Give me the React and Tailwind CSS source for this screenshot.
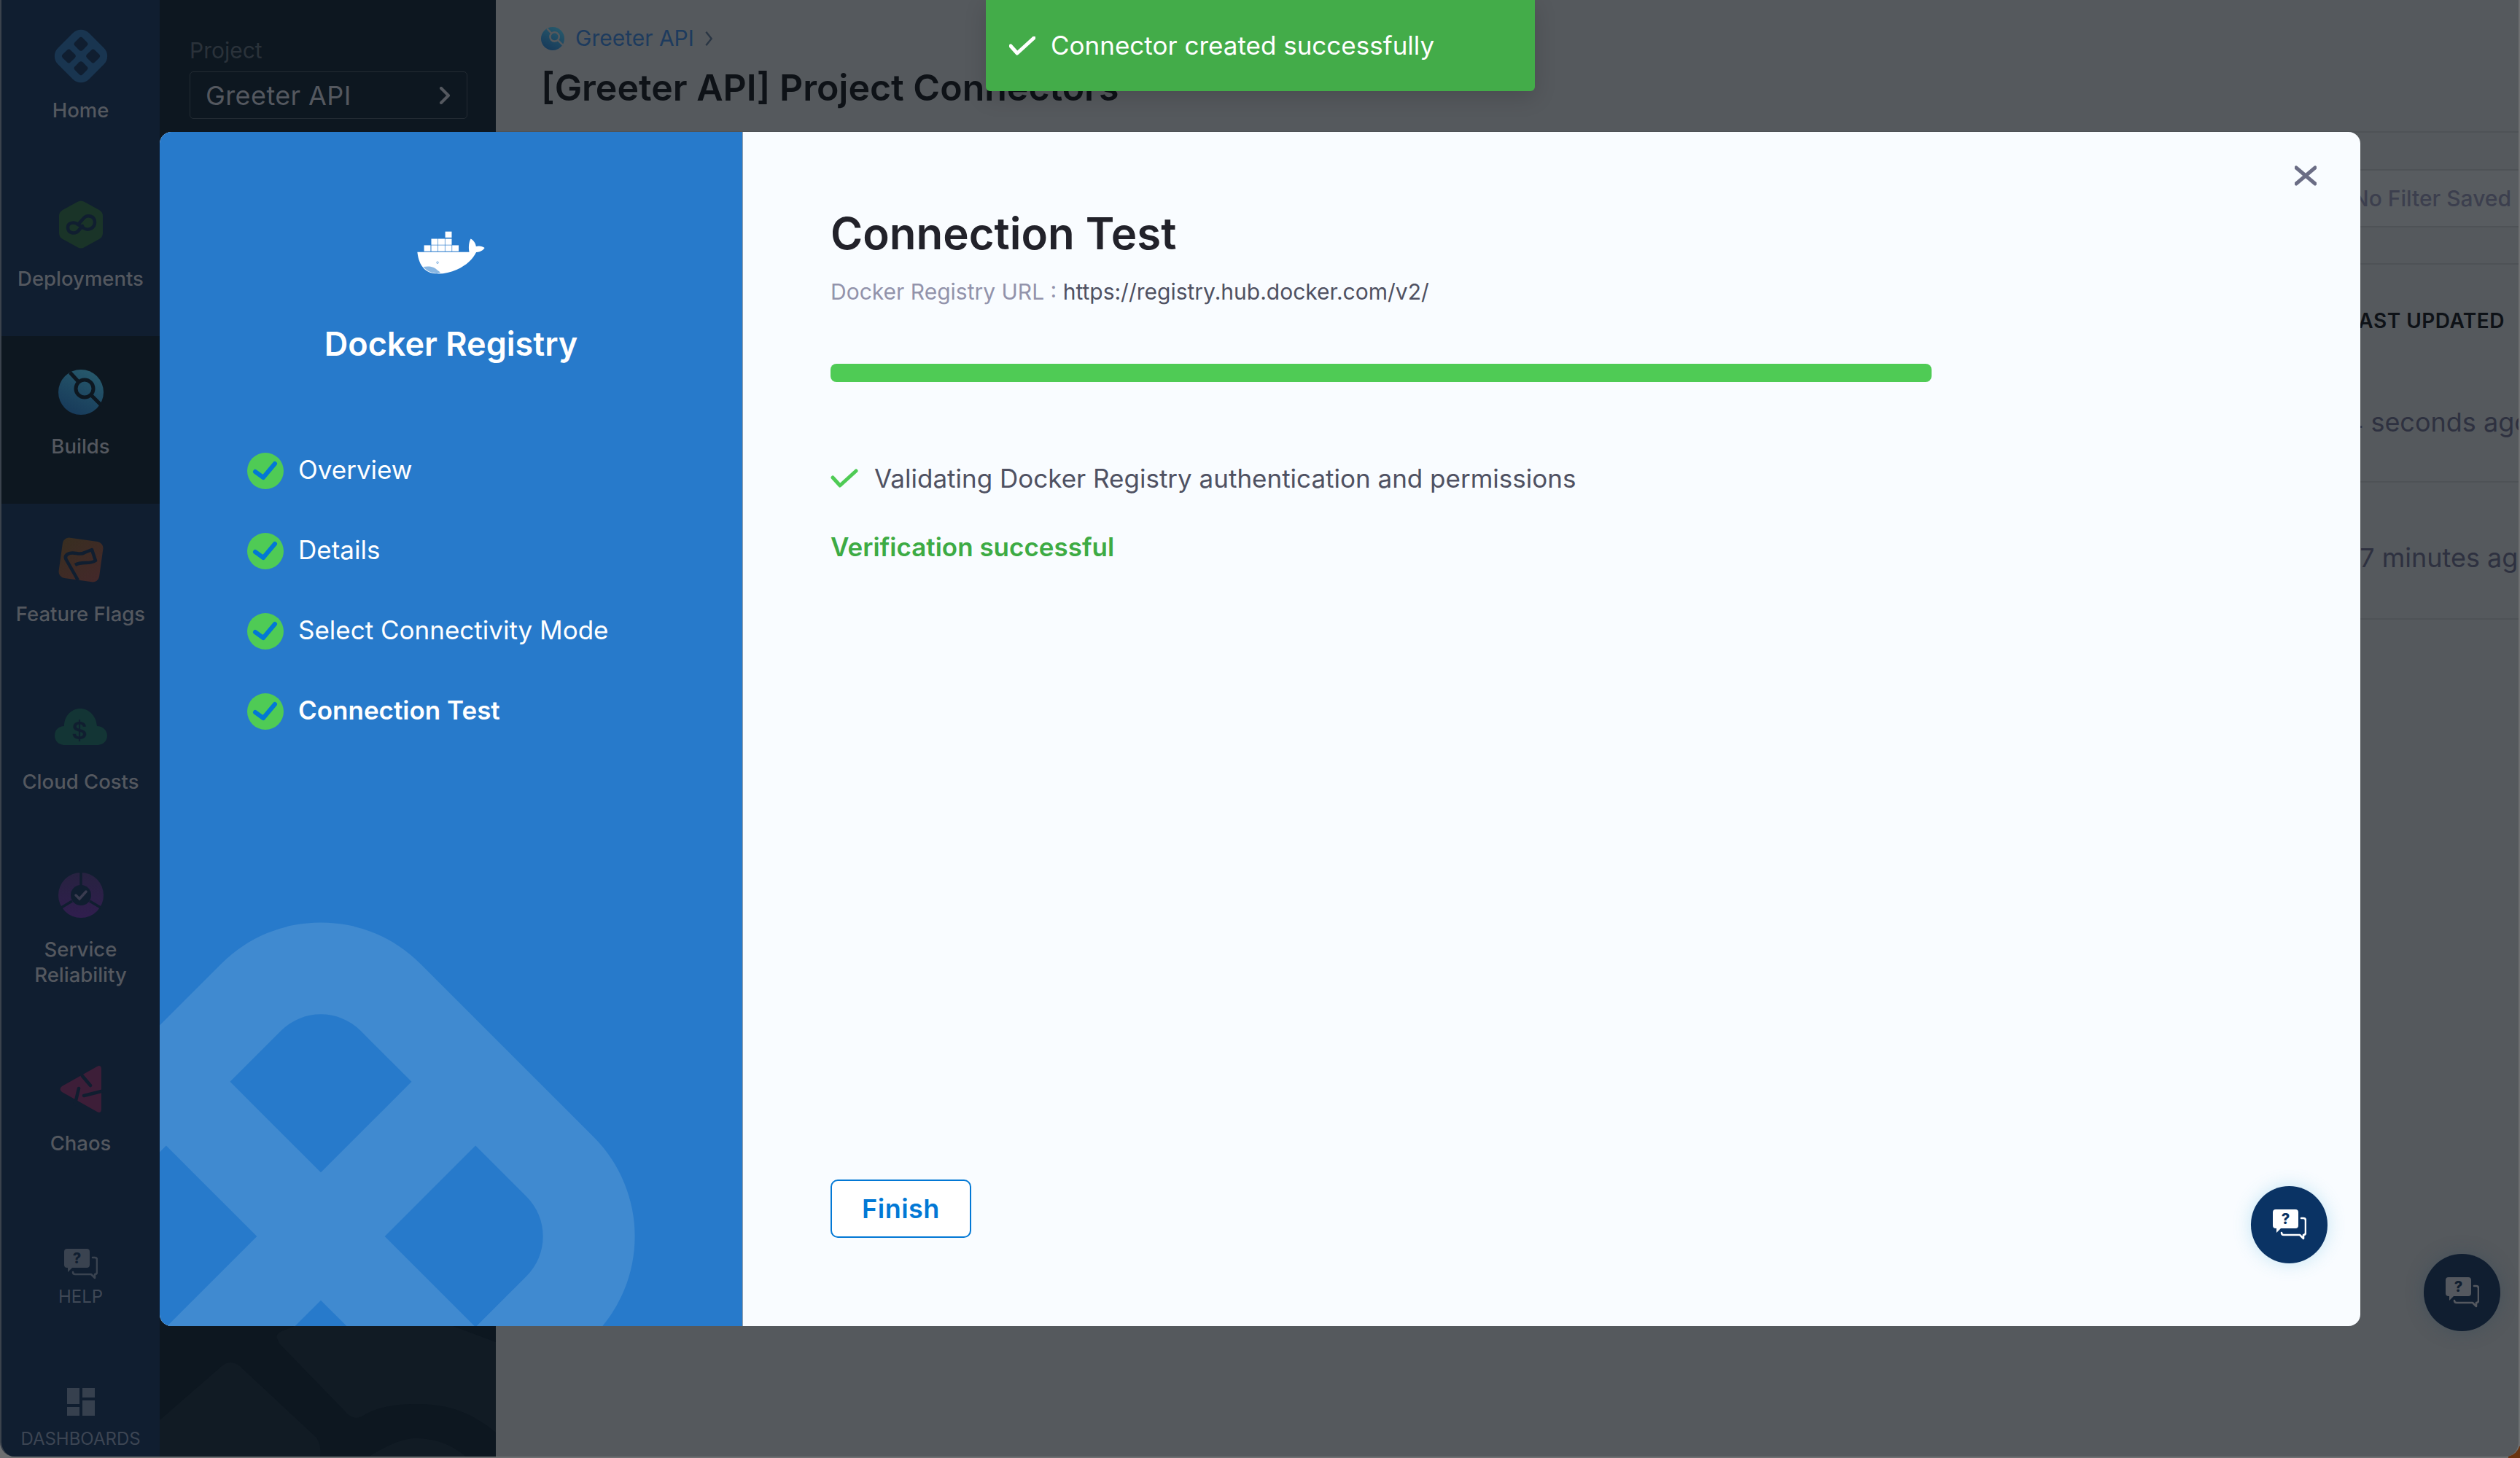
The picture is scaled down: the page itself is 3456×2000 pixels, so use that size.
const F = { fontFamily: 'Inter, "Noto Sans", sans-serif' };

function HarnessMark({ outer, inner }) {
  return (
    <svg viewBox="-50 -50 100 100" className="w-full h-full">
      <g transform="rotate(45)">
        <rect x="-36" y="-36" width="72" height="72" rx="19" fill={outer} />
        <rect x="-23" y="-23" width="18" height="18" rx="4" fill={inner} />
        <rect x="5" y="-23" width="18" height="18" rx="4" fill={inner} />
        <rect x="-23" y="5" width="18" height="18" rx="4" fill={inner} />
        <rect x="5" y="5" width="18" height="18" rx="4" fill={inner} />
      </g>
    </svg>
  );
}

function DeployIcon() {
  return (
    <svg viewBox="0 0 62 66" className="w-[62px] h-[66px]">
      <path d="M26 2 Q31 -1 36 2 L56 13 Q61 16 61 21 L61 45 Q61 50 56 53 L36 64 Q31 67 26 64 L6 53 Q1 50 1 45 L1 21 Q1 16 6 13 Z" fill="#1a3428" />
      <path d="M13 37 C13 30 22 29 27 33 L35 38 C41 42 50 38 50 30 C50 21 40 19 35 24 L27 33 M13 37 C13 45 23 47 28 41 L33 35" fill="none" stroke="#101e30" strokeWidth="4.5" strokeLinecap="round" />
    </svg>
  );
}

function BuildIcon({ size = 62, bgStroke = '#0d1720', id = 'b1' }) {
  return (
    <svg viewBox="0 0 62 62" style={{ width: size, height: size }}>
      <defs>
        <linearGradient id={id} x1="0.8" y1="0" x2="0.3" y2="1">
          <stop offset="0" stopColor="#275a6c" />
          <stop offset="1" stopColor="#173a5a" />
        </linearGradient>
      </defs>
      <circle cx="31" cy="31" r="31" fill={`url(#${id})`} />
      <circle cx="36" cy="26" r="12" fill="none" stroke={bgStroke} strokeWidth="5" />
      <path d="M16 4 L28 17 M45 35 L60 50" stroke={bgStroke} strokeWidth="5" />
    </svg>
  );
}

function FlagIcon() {
  return (
    <svg viewBox="0 0 66 66" className="w-[66px] h-[66px]">
      <defs>
        <linearGradient id="ff" x1="0" y1="0" x2="1" y2="1">
          <stop offset="0" stopColor="#382e20" />
          <stop offset="1" stopColor="#44282a" />
        </linearGradient>
      </defs>
      <rect x="5" y="5" width="56" height="56" rx="9" fill="url(#ff)" transform="rotate(8 33 33)" />
      <path d="M29 61 L13 33 Q10 28 15 25 C23 20 30 28 38 23 L48 19 L53 34 C44 40 35 34 25 40" fill="none" stroke="#101e30" strokeWidth="4.5" strokeLinejoin="round" />
    </svg>
  );
}

function CloudIcon() {
  return (
    <svg viewBox="0 0 72 52" className="w-[72px] h-[52px]">
      <path d="M14 50 C5 50 0 44 0 37 C0 29 6 24 13 24 C13 10 23 0 35 0 C47 0 57 10 58 24 C66 24 72 30 72 37 C72 45 66 50 58 50 Z" fill="#133535" />
      <text x="34" y="42" textAnchor="middle" fontSize="33" fontWeight="600" fontFamily="Inter, sans-serif" fill="#101e30">$</text>
    </svg>
  );
}

function SrmIcon() {
  return (
    <svg viewBox="0 0 62 62" className="w-[62px] h-[62px]">
      <defs>
        <linearGradient id="sr" x1="0" y1="0" x2="0" y2="1">
          <stop offset="0" stopColor="#272240" />
          <stop offset="1" stopColor="#301e4e" />
        </linearGradient>
      </defs>
      <circle cx="31" cy="31" r="31" fill="url(#sr)" />
      <circle cx="31" cy="31" r="14" fill="#101e30" />
      <path d="M31 0 V18 M19 39 L4 48 M43 39 L58 48" stroke="#101e30" strokeWidth="3.5" />
      <path d="M24 31 L29 36 L38 26" fill="none" stroke="#3a3c50" strokeWidth="3.5" strokeLinecap="round" />
    </svg>
  );
}

function ChaosIcon() {
  return (
    <svg viewBox="0 0 60 66" className="w-[60px] h-[66px]">
      <path d="M52 2 Q58 -1 58 6 L58 60 Q58 67 52 64 L4 37 Q-1 33 4 29 Z" fill="#3d1e38" />
      <path d="M32 15 L43 28 M27 32 L22 53 M34 42 L58 36" stroke="#101e30" strokeWidth="4.5" strokeLinecap="round" />
    </svg>
  );
}

function HelpGlyph({ fill, cut, className }) {
  return (
    <svg viewBox="0 0 46 42" className={className}>
      <path d="M4 0 H31 Q35 0 35 4 V22 Q35 26 31 26 H11 L5 32 V26 H4 Q0 26 0 22 V4 Q0 0 4 0 Z" fill={fill} />
      <text x="17.5" y="20" textAnchor="middle" fontSize="20" fontWeight="800" fontFamily="Inter, sans-serif" fill={cut}>?</text>
      <path d="M39 12 H42 Q45 12 45 15 V32 Q45 35 42 35 V40 L37 35 H15 Q12 35 12 32" fill="none" stroke={fill} strokeWidth="2.6" strokeLinecap="round" strokeLinejoin="round" />
    </svg>
  );
}

function DashIcon() {
  return (
    <svg viewBox="0 0 38 38" className="w-[38px] h-[38px]" fill="#36404e">
      <rect x="0" y="0" width="17" height="22" />
      <rect x="21" y="0" width="17" height="13" />
      <rect x="0" y="26" width="17" height="12" />
      <rect x="21" y="17" width="17" height="21" />
    </svg>
  );
}

function NavItem({ icon, label, active, h = 'h-[230px]' }) {
  return (
    <div className={`${h} flex flex-col items-center pt-[37px] ${active ? 'bg-[#0d1720]' : ''}`}>
      <div className="h-[80px] flex items-center justify-center">{icon}</div>
      <div className="mt-[17px] text-center text-[27.5px] leading-[35px] font-medium text-[#54585f] whitespace-pre-line">{label}</div>
    </div>
  );
}

function Docker() {
  const boxes = [[331,110],[273,140],[302,140],[331,140],[243,167],[273,167],[302,167],[331,167],[360,167]];
  return (
    <svg viewBox="215 105 280 182" className="w-[93px] h-[60px]">
      {boxes.map(([x, y]) => <rect key={x + '-' + y} x={x} y={y} width="27" height="25" fill="#fff" />)}
      <path d="M215 195 H431 C427 175 430 152 437 140 C448 146 458 158 459 172 C470 168 486 170 495 178 C488 190 472 197 460 196 C445 225 420 250 380 268 C350 282 320 287 290 285 C250 281 222 255 215 195 Z" fill="#fff" />
      <circle cx="299" cy="239" r="4" fill="none" stroke="#277acb" strokeWidth="1.6" />
      <path d="M240 257 C262 252 285 255 300 272 C310 279 318 283 296 284 C270 283 252 272 240 257 Z" fill="#277acb" opacity="0.55" />
    </svg>
  );
}

function Step({ label, bold }) {
  return (
    <div className="flex items-center h-[50px]">
      <svg viewBox="0 0 50 50" className="w-[50px] h-[50px] shrink-0">
        <circle cx="25" cy="25" r="25" fill="#4fcb55" />
        <path d="M11 26 L22 34 L38 15" fill="none" stroke="#0278d5" strokeWidth="6" strokeLinecap="round" strokeLinejoin="round" />
      </svg>
      <span className={`ml-[20px] -mt-[5px] text-[35px] leading-[44px] text-white ${bold ? 'font-semibold' : 'font-normal'}`}>{label}</span>
    </div>
  );
}

function Watermark() {
  const r = 77;
  const hole = (sx, sy) => {
    // one rounded outer corner, three sharp; sx, sy say which quadrant the hole lies in
    const a = 62;
    const b = 238;
    const sweep = sx * sy > 0 ? 1 : 0;
    return `M${sx * a} ${sy * a} L${sx * b} ${sy * a} L${sx * b} ${sy * (b - r)} A${r} ${r} 0 0 ${sweep} ${sx * (b - r)} ${sy * b} L${sx * a} ${sy * b} Z`;
  };
  const R = 193;
  const S = 361;
  const d = [
    `M${-S + R} ${-S} H${S - R} A${R} ${R} 0 0 1 ${S} ${-S + R} V${S - R} A${R} ${R} 0 0 1 ${S - R} ${S} H${-S + R} A${R} ${R} 0 0 1 ${-S} ${S - R} V${-S + R} A${R} ${R} 0 0 1 ${-S + R} ${-S} Z`,
    hole(-1, -1),
    hole(1, -1),
    hole(-1, 1),
    hole(1, 1),
  ].join(' ');
  return (
    <svg viewBox="0 0 799 1638" className="absolute inset-0 w-[799px] h-[1638px]">
      <path transform="translate(221 1515) rotate(45)" d={d} fill="#408ad0" fillRule="evenodd" />
    </svg>
  );
}

function SideWatermark() {
  return (
    <svg viewBox="0 0 461 181" className="absolute left-0 bottom-0 w-[461px] h-[181px]" fill="#111b24">
      <path d="M0 131 L85 57 Q97 47 110 57 L215 155 Q222 165 220 181 L0 181 Z" />
      <path d="M161 19 Q158 12 170 8 L190 0 L397 0 L461 24 L461 148 C420 115 390 109 350 109 C310 109 290 118 277 126 Q267 131 258 123 L164 26 Z" />
      <path d="M287 181 C320 160 340 156 350 156 C380 156 400 165 420 181 Z" />
    </svg>
  );
}

export default function App() {
  return (
    <div className="relative w-[3456px] h-[2000px] overflow-hidden bg-[#6d6f71]" style={F}>
      <div className="absolute right-0 bottom-0 w-[16px] h-[16px] bg-[#6b3410]" />
      <div className="relative flex w-[3456px] h-[1998px] rounded-b-[20px] overflow-hidden bg-[#55595d] border-l-2 border-r-2 border-l-[#3a424c] border-r-[#6d6f71]">
        {/* primary nav */}
        <aside className="w-[217px] shrink-0 flex flex-col bg-[#101e30]">
          <NavItem h="h-[231px]" icon={<div className="w-[84px] h-[84px]"><HarnessMark outer="#193550" inner="#101e30" /></div>} label="Home" />
          <NavItem icon={<DeployIcon />} label="Deployments" />
          <NavItem icon={<BuildIcon id="b-nav" />} label="Builds" active />
          <NavItem icon={<FlagIcon />} label="Feature Flags" />
          <NavItem icon={<CloudIcon />} label="Cloud Costs" />
          <NavItem icon={<SrmIcon />} label={'Service\nReliability'} h="h-[266px]" />
          <NavItem icon={<ChaosIcon />} label="Chaos" h="h-[230px]" />
          <div className="flex flex-col items-center pt-[66px]">
            <HelpGlyph fill="#3a4350" cut="#101e30" className="w-[46px] h-[42px]" />
            <div className="mt-[9px] text-[24px] leading-[30px] text-[#3f4856]">HELP</div>
          </div>
          <div className="flex flex-col items-center pt-[110px]">
            <DashIcon />
            <div className="mt-[17px] text-[24px] leading-[30px] text-[#3c4553]">DASHBOARDS</div>
          </div>
        </aside>

        {/* secondary nav */}
        <div className="relative w-[461px] shrink-0 bg-[#0d1720] px-[41px] pt-[50px] overflow-hidden">
          <SideWatermark />
          <div className="text-[30px] leading-[38px] text-[#2a323a]">Project</div>
          <div className="mt-[10px] h-[65px] w-[381px] rounded-[5px] border border-[#232b33] pl-[21px] pr-[22px] flex items-center justify-between">
            <span className="text-[36px] tracking-[0.4px] text-[#54585f]">Greeter API</span>
            <svg viewBox="0 0 16 24" className="w-[16px] h-[24px]"><path d="M3 2 L13 12 L3 22" fill="none" stroke="#54585f" strokeWidth="4" strokeLinecap="round" strokeLinejoin="round" /></svg>
          </div>
        </div>

        {/* main */}
        <main className="flex-1 min-w-0 flex flex-col overflow-hidden">
          <header className="h-[182px] border-b-2 border-[#4e5256] pl-[62px] pt-[36px] shrink-0">
            <div className="flex items-center h-[33px]">
              <BuildIcon size={32} bgStroke="#55595d" id="b-crumb" />
              <span className="ml-[15px] text-[30px] text-[#1d3b5e]">Greeter API</span>
              <svg viewBox="0 0 12 24" className="ml-[14px] w-[12px] h-[22px]"><path d="M2 2 L10 12 L2 22" fill="none" stroke="#2a3644" strokeWidth="2.6" /></svg>
            </div>
            <h1 className="mt-[20px] text-[50px] leading-[62px] font-semibold text-[#0e1217] whitespace-nowrap">[Greeter API] Project Connectors</h1>
          </header>
          <div className="h-[52px] border-b-2 border-[#4e5256] shrink-0" />
          <div className="h-[78px] border-b-2 border-[#4e5256] shrink-0 flex items-center justify-end pr-[10px] bg-[#585c60]">
            <span className="text-[30px] font-medium text-[#3c3f4e]">No Filter Saved</span>
          </div>
          <div className="h-[51px] border-b-2 border-[#4e5256] shrink-0" />
          <div className="h-[299px] border-b-2 border-[#4e5256] shrink-0 grid grid-cols-[1fr_236px] content-start">
            <div />
            <div className="pt-[59px] text-[28px] leading-[36px] font-semibold tracking-[0.5px] text-[#0e1217] whitespace-nowrap">LAST UPDATED</div>
            <div />
            <div className="pt-[99px] text-[36px] leading-[44px] text-[#2e3140] whitespace-nowrap">4 seconds ago</div>
          </div>
          <div className="h-[188px] border-b-2 border-[#4e5256] shrink-0 grid grid-cols-[1fr_240px]">
            <div />
            <div className="pt-[81px] text-[36px] leading-[44px] text-[#2e3140] whitespace-nowrap">37 minutes ago</div>
          </div>
        </main>
      </div>

      {/* help bubble behind the modal */}
      <div className="absolute left-[3324px] top-[1720px] w-[105px] h-[106px] rounded-full bg-[#101e30] flex items-center justify-center shadow-[0_0_24px_rgba(40,70,90,0.35)]">
        <HelpGlyph fill="#54585f" cut="#101e30" className="w-[46px] h-[42px]" />
      </div>

      {/* modal */}
      <div className="absolute left-[219px] top-[181px] w-[3018px] h-[1638px] rounded-[16px] overflow-hidden flex bg-[#f9fcff]">
        <div className="relative w-[799px] shrink-0 bg-[#277acb] overflow-hidden">
          <Watermark />
          <div className="relative flex flex-col pt-[135px]">
            <div className="flex justify-center"><Docker /></div>
            <div className="mt-[67px] text-center text-[45px] leading-[58px] font-semibold text-white">Docker Registry</div>
            <div className="mt-[120px] pl-[120px] flex flex-col gap-[60px]">
              <Step label="Overview" />
              <Step label="Details" />
              <Step label="Select Connectivity Mode" />
              <Step label="Connection Test" bold />
            </div>
          </div>
        </div>
        <div className="relative flex-1 flex flex-col pl-[120px] pt-[100px] pb-[121px] border-l border-[#9aa3ad]">
          <svg viewBox="0 0 30 30" className="absolute right-[60px] top-[45px] w-[30px] h-[30px]">
            <path d="M2 4 L28 26 M28 4 L2 26" stroke="#6b6d85" strokeWidth="5" strokeLinecap="round" />
          </svg>
          <h2 className="text-[60px] leading-[78px] font-semibold text-[#22222a]">Connection Test</h2>
          <div className="mt-[21px] text-[30px] leading-[40px] whitespace-nowrap">
            <span className="text-[#9293ab]">Docker Registry URL : </span>
            <span className="text-[#4f5162]">https://registry.hub.docker.com/v2/</span>
          </div>
          <div className="mt-[79px] h-[25px] w-[1510px] rounded-[8px] bg-[#4fcb55]" />
          <div className="mt-[112px] flex items-center h-[40px]">
            <svg viewBox="0 0 38 26" className="w-[38px] h-[26px]"><path d="M3 12 L13 23 L35 3" fill="none" stroke="#4fcb55" strokeWidth="5" strokeLinecap="round" strokeLinejoin="round" /></svg>
            <span className="ml-[22px] text-[35px] leading-[40px] text-[#4f5162]">Validating Docker Registry authentication and permissions</span>
          </div>
          <div className="mt-[54px] text-[35px] leading-[40px] font-semibold text-[#3dab44]">Verification successful</div>
          <button className="mt-auto w-[193px] h-[80px] rounded-[10px] border-2 border-[#0278d5] bg-white text-[36px] font-semibold text-[#0278d5] tracking-[0.5px]">Finish</button>
          <div className="absolute left-[2068px] top-[1446px] w-[105px] h-[106px] rounded-full bg-[#0a3364] flex items-center justify-center shadow-[0_0_24px_rgba(80,180,220,0.3)]">
            <HelpGlyph fill="#ffffff" cut="#0a3364" className="w-[46px] h-[42px]" />
          </div>
        </div>
      </div>

      {/* toast */}
      <div className="absolute left-[1352px] top-0 w-[753px] h-[125px] rounded-b-[6px] bg-[#43ac49] flex items-center pl-[32px] shadow-[0_8px_30px_rgba(0,0,0,0.15)]">
        <svg viewBox="0 0 36 26" className="w-[36px] h-[26px] shrink-0"><path d="M2 13 L11 23 L34 2" fill="none" stroke="#fff" strokeWidth="5" strokeLinecap="round" strokeLinejoin="round" /></svg>
        <span className="ml-[21px] text-[35px] text-white whitespace-nowrap">Connector created successfully</span>
      </div>
    </div>
  );
}
